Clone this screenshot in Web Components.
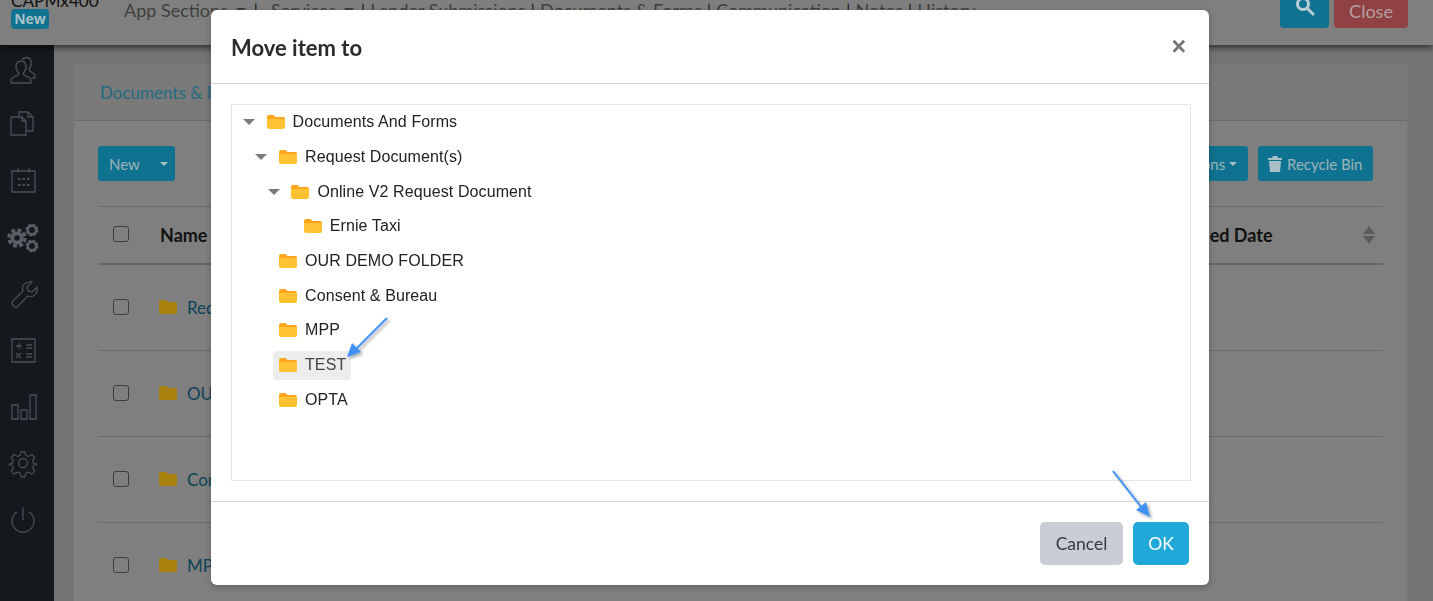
<!DOCTYPE html>
<html>
<head>
<meta charset="utf-8">
<title>Move item to</title>
<style>
    html, body { margin: 0; height: 601px; overflow: hidden; background: #747474; }
    body { font-family: Lato, "Open Sans", sans-serif; }
    #page { display: grid; grid-template-columns: 54px 1fr; grid-template-rows: 45px 1fr; height: 601px; overflow: hidden; }
    app-header { grid-column: 1 / 3; }
</style>
</head>
<body>
<div id="page">
    <app-header></app-header>
    <app-sidebar></app-sidebar>
    <doc-panel>
        <doc-row name="Request Document(s)"></doc-row>
        <doc-row name="OUR DEMO FOLDER"></doc-row>
        <doc-row name="Consent &amp; Bureau"></doc-row>
        <doc-row name="MPP"></doc-row>
    </doc-panel>
</div>

<move-dialog>
    <tree-node label="Documents And Forms" open>
        <tree-node label="Request Document(s)" open>
            <tree-node label="Online V2 Request Document" open>
                <tree-node label="Ernie Taxi"></tree-node>
            </tree-node>
        </tree-node>
        <tree-node label="OUR DEMO FOLDER"></tree-node>
        <tree-node label="Consent &amp; Bureau"></tree-node>
        <tree-node label="MPP"></tree-node>
        <tree-node label="TEST" selected></tree-node>
        <tree-node label="OPTA"></tree-node>
    </tree-node>
</move-dialog>

<script>
// the page behind the dialog is painted in its dimmed colours directly
const sidebarIcons = [
    `<g transform="translate(0 5)"><path d="M3 26v-3c0-2.500 5-3.500 7-5 1-1 .5-2.500-.5-3.500-3-4-1.500-10.500 3.500-10.500s6.500 6.500 3.500 10.500c-1 1-1.500 2.500-.5 3.500 2 1.500 7 2.500 7 5v3z"/><path d="M14 2.500c1-1.500 3-2 4.500-2 5 0 6 6.500 3.500 10-1 1.200-1 2.500-.2 3.500 1.500 1.500 5.200 2.200 5.200 4.500v2.500h-3.500"/></g>`,
    `<path d="M3 8h11l4 4v14H3zM14 8v4h4M11 8V3h9l5 5v14h-7M20 3v5h5"/>`,
    `<path d="M4 6h23v21H4zM10 3v5M21 3v5"/><path d="M10 14h2.500M14.500 14h2.500M19 14h2.500M10 20h2.500M14.500 20h2.500M19 20h2.500" stroke-width="2"/>`,
    `<g transform="translate(-1 0)"><circle cx="10" cy="16" r="6.500" fill="#5a5f64" stroke="none"/><circle cx="10" cy="16" r="8" stroke="#5a5f64" stroke-width="3.500" stroke-dasharray="4 2.300"/><circle cx="10" cy="16" r="2.800" fill="#15191d" stroke="none"/><circle cx="25" cy="8" r="4.200" stroke="#5a5f64" stroke-width="2.600"/><circle cx="25" cy="8" r="5.500" stroke="#5a5f64" stroke-width="1.800" stroke-dasharray="2.500 1.800"/><circle cx="25" cy="24" r="4.200" stroke="#5a5f64" stroke-width="2.600"/><circle cx="25" cy="24" r="5.500" stroke="#5a5f64" stroke-width="1.800" stroke-dasharray="2.500 1.800"/></g>`,
    `<path d="M4 24l11-11c-2-5 2-10 9-9l-5 5 1 4 4 1 5-5c1 7-4 11-9 9L9 29c-2 1.500-6-2.500-5-5z"/>`,
    `<path d="M4 4h23v23H4zM8 11h6M11 8v6M18 10h6M18 13h6M8 18l5 5M13 18l-5 5M18 19h6M18 22h6"/>`,
    `<path d="M4 14h6v14H4zM13 19h6v9h-6zM22 4h6v24h-6z"/>`,
    `<circle cx="15" cy="15" r="4.500"/><path d="M13 3h4l1 4 3 1 3.500-2 3 3-2 3.500 1 3 4 1-4 1-1 3 2 3.500-3 3-3.500-2-3 1-1 4h-4l-1-4-3-1-3.500 2-3-3 2-3.500-1-3-4-1 4-1 1-3-2-3.500 3-3 3.500 2 3-1z" transform="translate(1 1) scale(.93)"/>`,
    `<path d="M15 3v13M9 8a11 11 0 1 0 12 0"/>`
];

class AppHeader extends HTMLElement {
    constructor() {
        super();
        this.attachShadow({ mode: 'open' });
        this.shadowRoot.innerHTML = `
            <style>
                :host { display: flex; position: relative; z-index: 2; height: 45px; background: #7f7f7f;
                        box-shadow: 0 3px 6px rgba(0,0,0,.55); align-items: flex-start; overflow: visible; }
                .brand { margin: -10px 0 0 11px; width: 113px; font-size: 17.200px; line-height: 22px; color: #111; }
                .badge { display: block; width: 38px; height: 20px; margin-top: -3px; border-radius: 4px; background: #0f7290;
                         color: #a9c0c8; font: 700 14px/20px "Open Sans", sans-serif; text-align: center; }
                nav { display: flex; gap: 5px; margin-top: -2px; font-size: 18px; line-height: 24px; color: #3f3f3f; white-space: nowrap; }
                nav i { display: inline-block; width: 0; height: 0; margin: 0 0 3px 3px; border: 5px solid transparent; border-bottom: 0; border-top: 6px solid #3f3f3f; }
                nav .sep { color: #222; }
                .first { margin-right: 3px; }
                .second { margin: 0 2px 0 8px; }
                .btns { display: flex; gap: 5px; margin: -15px 25px 0 auto; }
                .btns div { height: 43px; border-radius: 4px; display: flex; align-items: flex-end; justify-content: center; }
                .search { width: 49px; background: #0f7290; }
                .search svg { margin-bottom: 12px; }
                .close { width: 74px; background: #8f4144; color: #b5a0a1; font-size: 18px; line-height: 34px; }
            </style>
            <div class="brand">CAPMx400<span class="badge">New</span></div>
            <nav><span class="first">App Sections <i></i></span><span class="sep">|</span><span class="second">Services <i></i></span><span class="sep">|</span><span>Lender Submissions</span><span class="sep">|</span><span>Documents &amp; Forms</span><span class="sep">|</span><span>Communication</span><span class="sep">|</span><span>Notes</span><span class="sep">|</span><span>History</span></nav>
            <div class="btns">
                <div class="search"><svg width="20" height="20" viewBox="0 0 20 20" fill="none" stroke="#b9cdd4" stroke-width="3"><circle cx="8" cy="8" r="5.500"/><path d="M12 12l6 6" stroke-linecap="round"/></svg></div>
                <div class="close">Close</div>
            </div>`;
    }
}

class AppSidebar extends HTMLElement {
    constructor() {
        super();
        this.attachShadow({ mode: 'open' });
        this.shadowRoot.innerHTML = `
            <style>
                :host { display: flex; flex-direction: column; align-items: center; background: #15191d; padding: 7px 9px 0 0; box-sizing: border-box; height: 556px; gap: 26.500px; }
                svg { display: block; width: 30px; height: 30px; fill: none; stroke: #4a4f54; stroke-width: 1.300; overflow: visible; }
            </style>
            ${sidebarIcons.map(p => `<svg viewBox="0 0 30 30">${p}</svg>`).join('')}`;
    }
}

class DocPanel extends HTMLElement {
    constructor() {
        super();
        this.attachShadow({ mode: 'open' });
        this.shadowRoot.innerHTML = `
            <style>
                :host { display: block; margin: 19px 25px 0 19px; height: 600px; box-sizing: border-box; background: #7f7f7f;
                        border: 1px solid #777; border-radius: 4px; font-size: 17px; }
                .tab { height: 55px; padding-left: 26px; line-height: 55px; background: #7a7a7a; border-bottom: 1px solid #6a6a6a; color: #226a81; }
                .body { padding: 25px 24px 0 24px; }
                .tools { display: flex; align-items: stretch; gap: 10px; height: 35px; font-size: 15px; color: #9fb4bb; }
                .btn { background: #0f7290; border-radius: 3px; display: flex; align-items: center; padding: 0 11px; }
                .new { width: 77px; box-sizing: border-box; gap: 20px; }
                .actions { margin-left: auto; }
                .bin { width: 115px; box-sizing: border-box; gap: 5px; margin-right: 10px; padding: 0 10px; }
                .caret { width: 0; height: 0; border: 4px solid transparent; border-top-color: #a9bfc6; border-bottom: 0; }
                .head { display: grid; grid-template-columns: 62px 1fr 226px; align-items: center; height: 56px; margin-top: 25px;
                        border-top: 1px solid #6a6a6a; border-bottom: 2px solid #666; font-size: 18px; font-weight: 700; color: #111; }
                .date { display: flex; justify-content: space-between; align-items: center; padding-right: 8px; }
                .box { width: 14px; height: 14px; margin: -2px 0 0 15px; border: 1px solid #3d3d3d; border-radius: 3px; }
                .sort { display: flex; flex-direction: column; gap: 2px; }
                .sort b { width: 0; height: 0; border: 6px solid transparent; border-top: 0; border-bottom: 8px solid #5c5c5c; }
                .sort b + b { border-bottom: 0; border-top: 8px solid #5c5c5c; }
            </style>
            <div class="tab">Documents &amp; Forms</div>
            <div class="body">
                <div class="tools">
                    <div class="btn new">New <span class="caret"></span></div>
                    <div class="btn actions">Actions&nbsp;<span class="caret"></span></div>
                    <div class="btn bin">
                        <svg width="14" height="16" viewBox="0 0 14 16" fill="#a9bfc6"><path d="M0 2h4l1-2h4l1 2h4v2H0zM1 5h12l-1 11H2z"/></svg>
                        Recycle Bin
                    </div>
                </div>
                <div class="head">
                    <div class="box"></div>
                    <div>Name</div>
                    <div class="date">Modified Date <span class="sort"><b></b><b></b></span></div>
                </div>
                <slot></slot>
            </div>`;
    }
}

class DocRow extends HTMLElement {
    constructor() {
        super();
        this.attachShadow({ mode: 'open' });
        this.shadowRoot.innerHTML = `
            <style>
                :host { display: flex; align-items: center; height: 85px; border-bottom: 1px solid #6a6a6a; font-size: 17px; color: #0d4257; }
                .box { width: 14px; height: 14px; margin: -2px 30px 0 15px; border: 1px solid #3d3d3d; border-radius: 3px; }
                svg { margin: -2px 10px 0 0; }
            </style>
            <div class="box"></div>
            <svg width="18" height="14" viewBox="0 0 18 14" fill="#a9820f"><path d="M0 2a2 2 0 0 1 2-2h5l2 2h7a2 2 0 0 1 2 2v8a2 2 0 0 1-2 2H2a2 2 0 0 1-2-2z"/></svg>
            <span>${this.getAttribute('name').replace('&', '&amp;')}</span>`;
    }
}

class TreeNode extends HTMLElement {
    constructor() {
        super();
        this.attachShadow({ mode: 'open' });
        const open = this.hasAttribute('open');
        const selected = this.hasAttribute('selected');
        this.shadowRoot.innerHTML = `
            <style>
                :host { display: block; font: 16px "Liberation Sans", Arial, sans-serif; letter-spacing: .1px; color: #222; }
                .row { display: flex; height: 29px; margin-bottom: 5.700px; align-items: center; }
                .toggle { width: 23px; display: flex; justify-content: center; }
                .toggle b { width: 0; height: 0; border: 6px solid transparent; border-bottom: 0; border-top: 6px solid #7b7b7b; }
                .pill { display: flex; align-items: center; gap: 8px; height: 29px; padding: 0 5px 0 6px; border-radius: 4px; }
                .pill.selected { background: #ededed; color: #444; }
                svg { display: block; filter: blur(.4px); }
                .kids { padding-left: 12.400px; }
            </style>
            <div class="row">
                <div class="toggle">${open ? '<b></b>' : ''}</div>
                <div class="pill ${selected ? 'selected' : ''}">
                    <svg width="18" height="14" viewBox="0 0 18 14"><path fill="#fba61e" d="M0 2a2 2 0 0 1 2-2h4.500l2 2H16a2 2 0 0 1 2 2v2H0z"/><path fill="#ffc233" d="M0 4h18v8a2 2 0 0 1-2 2H2a2 2 0 0 1-2-2z"/></svg>
                    <span>${this.getAttribute('label').replace('&', '&amp;')}</span>
                </div>
            </div>
            <div class="kids"><slot></slot></div>`;
    }
}

class MoveDialog extends HTMLElement {
    constructor() {
        super();
        this.attachShadow({ mode: 'open' });
        this.shadowRoot.innerHTML = `
            <style>
                :host { position: fixed; inset: 0; z-index: 10; display: flex; justify-content: center; align-items: flex-start; padding: 10px 13px 0 0; box-sizing: border-box; }
                .modal { position: relative; display: flex; flex-direction: column; width: 998px; height: 575px; background: #fff; border-radius: 6px; box-shadow: 0 2px 6px rgba(0,0,0,.25); }
                header { display: flex; align-items: center; justify-content: space-between; height: 74px; box-sizing: border-box; padding: 0 23px 1px 20px; border-bottom: 1px solid #d7d7d7; }
                h1 { margin: 2px 0 0; font-size: 22px; font-weight: 700; color: #2b2b2b; }
                .x { font: 700 25px/1 "Liberation Sans", sans-serif; color: #777; }
                .content { height: 418px; box-sizing: border-box; padding: 20px 18px 20px 20px; border-bottom: 1px solid #d7d7d7; }
                .tree { height: 377px; box-sizing: border-box; border: 1px solid #e6e6e6; padding: 2.700px 0 0 5.600px; overflow: hidden; }
                footer { display: flex; justify-content: flex-end; gap: 10px; padding: 20px 20px 0 0; font-size: 17.500px; }
                .btn { height: 43px; border-radius: 5px; display: flex; align-items: center; justify-content: center; }
                .cancel { width: 83px; background: #c9ced6; color: #343a40; }
                .ok { width: 56px; background: #1fa8d8; color: #fff; }
                .arrow { position: absolute; left: 0; top: 0; pointer-events: none; overflow: visible; }
            </style>
            <div class="modal">
                <header><h1>Move item to</h1><span class="x">&times;</span></header>
                <div class="content"><div class="tree"><slot></slot></div></div>
                <footer><div class="btn cancel">Cancel</div><div class="btn ok">OK</div></footer>
                <svg class="arrow" width="998" height="575" viewBox="211 10 998 575">
                    <defs><filter id="s" x="-30%" y="-30%" width="170%" height="170%"><feDropShadow dx="2" dy="2" stdDeviation="1.500" flood-color="#000" flood-opacity=".35"/></filter></defs>
                    <g filter="url(#s)" stroke="#3f90f5" stroke-width="2" fill="#3f90f5">
                        <path d="M387 318L355 350" fill="none"/>
                        <path d="M347 357l5-14 9 9z" stroke="none"/>
                        <path d="M1113 471L1142 508" fill="none"/>
                        <path d="M1150 517l-14-7 10-8z" stroke="none"/>
                    </g>
                </svg>
            </div>`;
    }
}

customElements.define('app-header', AppHeader);
customElements.define('app-sidebar', AppSidebar);
customElements.define('doc-panel', DocPanel);
customElements.define('doc-row', DocRow);
customElements.define('tree-node', TreeNode);
customElements.define('move-dialog', MoveDialog);
</script>
</body>
</html>
